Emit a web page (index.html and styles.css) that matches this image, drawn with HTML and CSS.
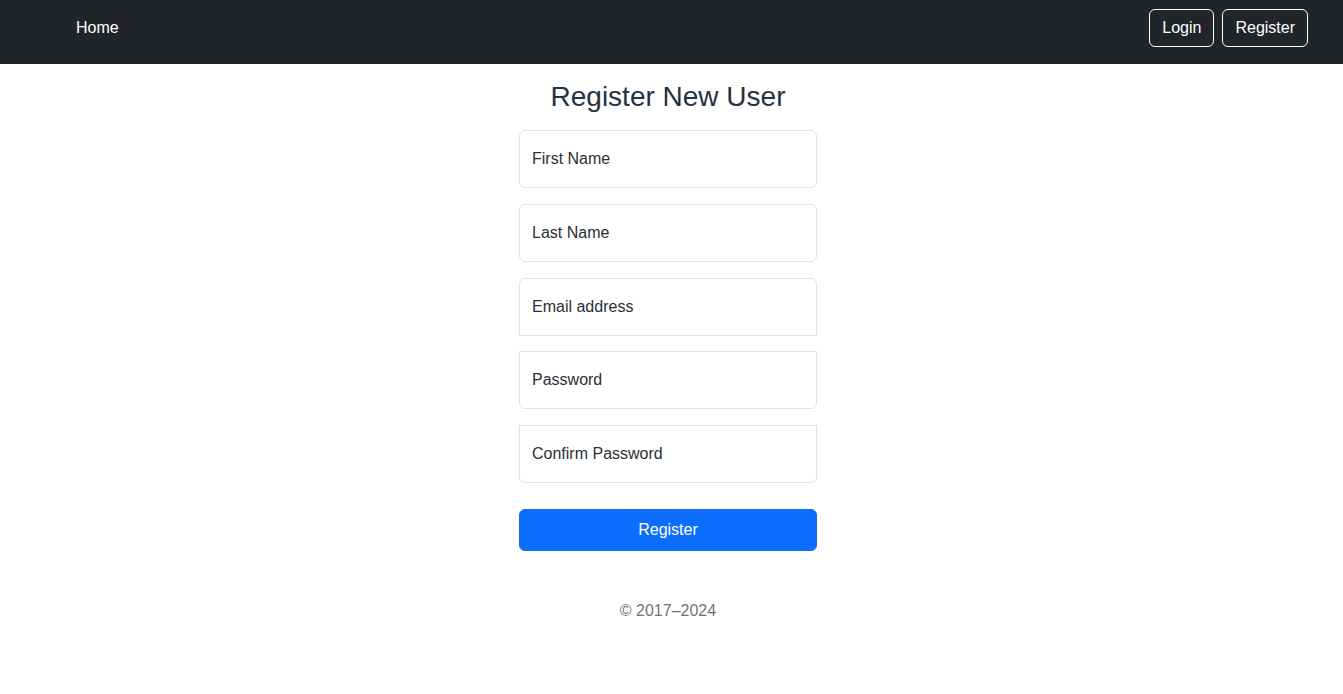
FILE: index.html
```html
<!DOCTYPE html>
<html lang="en">
<head>
<meta charset="utf-8">
<title>Register New User</title>
<link rel="stylesheet" href="styles.css">
</head>
<body>
<header class="navbar">
  <a class="nav-home" href="#">Home</a>
  <div class="nav-actions">
    <a class="btn-outline" href="#">Login</a>
    <a class="btn-outline" href="#">Register</a>
  </div>
</header>
<main class="main">
  <form class="form-signin">
    <h1 class="title">Register New User</h1>
    <div class="field">
      <input class="control" type="text" id="first">
      <label for="first">First Name</label>
    </div>
    <div class="field">
      <input class="control" type="text" id="last">
      <label for="last">Last Name</label>
    </div>
    <div class="field field-email">
      <input class="control email" type="email" id="email">
      <label for="email">Email address</label>
    </div>
    <div class="field">
      <input class="control password" type="password" id="pw">
      <label for="pw">Password</label>
    </div>
    <div class="field">
      <input class="control password" type="password" id="pw2">
      <label for="pw2">Confirm Password</label>
    </div>
    <button class="btn-primary" type="button">Register</button>
    <p class="copyright">© 2017–2024</p>
  </form>
</main>
</body>
</html>
```
FILE: styles.css
```css
* { box-sizing: border-box; }
html, body { margin: 0; padding: 0; }
body {
  font-family: "Liberation Sans", Arial, sans-serif;
  font-size: 16px;
  line-height: 1.5;
  color: #212529;
  background: #fff;
}
.navbar {
  height: 64px;
  background: #212529;
  display: flex;
  justify-content: space-between;
  align-items: flex-start;
  padding: 9px 35px 0 76px;
}
.nav-home {
  color: #fff;
  text-decoration: none;
  margin-top: 7px;
  line-height: 24px;
}
.nav-actions {
  display: flex;
  gap: 8px;
}
.btn-outline {
  display: block;
  height: 38px;
  padding: 6px 12px;
  border: 1px solid #fff;
  border-radius: 6px;
  color: #fff;
  text-decoration: none;
  line-height: 24px;
}
.main {
  display: flex;
  justify-content: center;
  padding-top: 16px;
  padding-right: 7px;
}
.form-signin {
  width: 298px;
  text-align: center;
}
.title {
  margin: 0 0 16px;
  font-size: 28px;
  font-weight: 400;
  line-height: 1.2;
  color: #253241;
  white-space: nowrap;
}
.field {
  position: relative;
  margin-bottom: 16px;
}
.field-email {
  margin-bottom: 15px;
}
.control {
  display: block;
  width: 100%;
  height: 58px;
  border: 1px solid #dee2e6;
  border-radius: 6px;
  padding: 16px 12px;
  font: inherit;
  background: #fff;
}
.control.email {
  border-bottom-left-radius: 0;
  border-bottom-right-radius: 0;
}
.control.password {
  border-top-left-radius: 0;
  border-top-right-radius: 0;
}
.field label {
  position: absolute;
  top: 0;
  left: 0;
  padding: 17px 13px;
  line-height: 24px;
  color: #2b3035;
  pointer-events: none;
}
.btn-primary {
  display: block;
  width: 100%;
  height: 42px;
  margin-top: 26px;
  border: 1px solid #0d6efd;
  border-radius: 6px;
  background: #0d6efd;
  color: #fff;
  font: inherit;
  line-height: 24px;
}
.copyright {
  margin: 48px 0 16px;
  color: #6c757d;
  line-height: 24px;
}
```
